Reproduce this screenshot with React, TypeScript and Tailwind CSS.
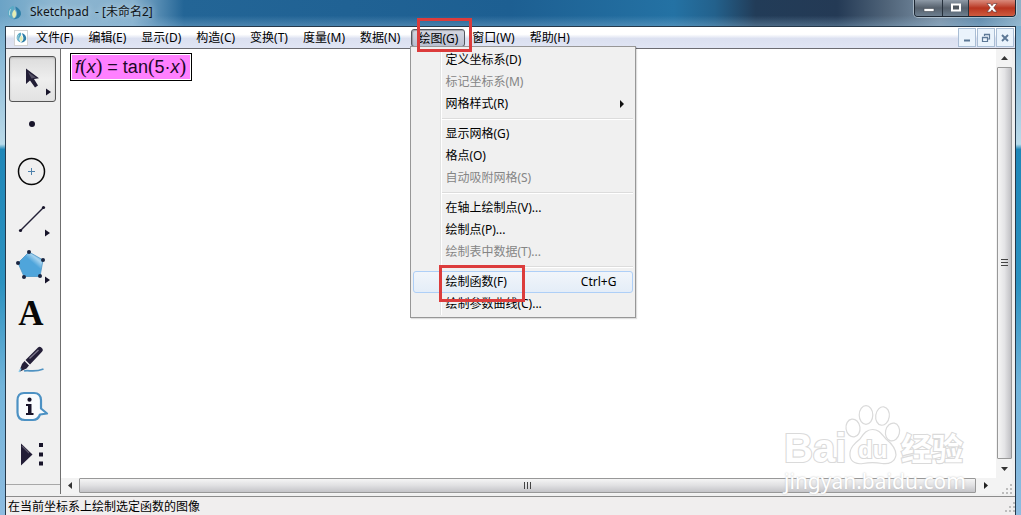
import type { ReactNode } from "react";

type MenuEntry = {
  label: string;
  disabled?: boolean;
  submenu?: boolean;
  active?: boolean;
  shortcut?: string;
};

const plotMenu: MenuEntry[][] = [
  [
    { label: "定义坐标系(D)" },
    { label: "标记坐标系(M)", disabled: true },
    { label: "网格样式(R)", submenu: true },
  ],
  [
    { label: "显示网格(G)" },
    { label: "格点(O)" },
    { label: "自动吸附网格(S)", disabled: true },
  ],
  [
    { label: "在轴上绘制点(V)..." },
    { label: "绘制点(P)..." },
    { label: "绘制表中数据(T)...", disabled: true },
  ],
  [
    { label: "绘制函数(F)", active: true, shortcut: "Ctrl+G" },
    { label: "绘制参数曲线(C)..." },
  ],
];

const menusBefore = ["文件(F)", "编辑(E)", "显示(D)", "构造(C)", "变换(T)", "度量(M)", "数据(N)"];
const menusAfter = ["窗口(W)", "帮助(H)"];

function AppLogo({ className }: { className: string }) {
  return (
    <svg viewBox="0 0 16 16" className={className} aria-hidden="true">
      <path d="M6.500 .8C2.500 2.500 .5 6 1 9.500C1.500 12.500 4 14.800 7 15C4.500 12.500 4 9 6.500 6C8 4 8 2 6.500 .8Z" fill="#5aa9c4" />
      <path d="M9 1.500C13.500 3.500 15.500 7 14.800 10.500C13.800 14 10 15.800 6.500 15C10 13.800 11.200 11 10.700 8C10.400 6 8.800 4 9 1.500Z" fill="#2f7fa8" />
      <path d="M8 5C4.800 8 4.800 11.500 7.500 14C10.500 11.500 10.500 8 8 5Z" fill="#e3edb4" />
      <path d="M4 4.500C2.500 6.500 2.300 9 3 11" fill="none" stroke="#c5e3ea" strokeWidth="1" />
    </svg>
  );
}

function TopMenu({ label }: { label: string }) {
  return (
    <button type="button" className="h-full shrink-0 pr-2 pl-[7px] whitespace-nowrap">
      {label}
    </button>
  );
}

function MenuRow({ entry }: { entry: MenuEntry }) {
  return (
    <button
      type="button"
      disabled={entry.disabled}
      className={
        entry.active
          ? "relative flex h-[22px] w-full items-center rounded-[3px] border border-[#aecff7] bg-gradient-to-b from-[#f1f5fa] to-[#e4edf8] pr-4 pl-[31px] text-left"
          : "relative flex h-[22px] w-full items-center border border-transparent pr-2 pl-[31px] text-left disabled:text-[#858585]"
      }
    >
      <span className="grow whitespace-nowrap">{entry.label}</span>
      {entry.shortcut && <span>{entry.shortcut}</span>}
      {entry.submenu && (
        <svg viewBox="0 0 4 8" className="h-2 w-1" aria-hidden="true">
          <path d="M0 0L4 4L0 8Z" fill="#111" />
        </svg>
      )}
      {entry.active && (
        <span className="pointer-events-none absolute -top-[7px] left-[25px] z-10 h-[37px] w-[86px] border-[3px] border-[#dc3c3c]" />
      )}
    </button>
  );
}

function PlotMenu() {
  return (
    <div className="absolute top-[17px] -left-px z-20 w-[226px] border border-[#979797] bg-[#f0f0f0] p-[2px] shadow-[1px_1px_1px_#00000020]">
      <span className="absolute inset-y-[2px] left-[29px] w-[2px] border-r border-l border-r-white border-l-[#e2e3e3]" />
      {plotMenu.map((group, index) => (
        <div key={group[0].label}>
          {index > 0 && (
            <div className="flex h-2 items-center pl-7">
              <div className="h-[2px] grow border-t border-b border-t-[#dcdcdc] border-b-white" />
            </div>
          )}
          {group.map((entry) => (
            <MenuRow key={entry.label} entry={entry} />
          ))}
        </div>
      ))}
    </div>
  );
}

function Tool({ label, selected, children }: { label: string; selected?: boolean; children: ReactNode }) {
  return (
    <button
      type="button"
      aria-label={label}
      className={
        selected
          ? "mb-px h-[46px] w-[47px] shrink-0 rounded-[3px] border border-[#555] bg-gradient-to-b from-[#dcdcdc] via-[#eeeeee] to-[#e2e2e2] shadow-[inset_0_1px_2px_#00000030]"
          : "h-[47px] w-[47px] shrink-0"
      }
    >
      <svg viewBox="0 0 47 47" className={selected ? "-m-px h-[47px] w-[47px]" : "h-[47px] w-[47px]"} aria-hidden="true">
        {children}
      </svg>
    </button>
  );
}

function Toolbox() {
  return (
    <div className="flex w-[55px] shrink-0 flex-col border-r border-[#6f6f6f] bg-[#f0f0f0] pt-[7px]">
      <div className="flex flex-col pl-[3px]">
        <Tool label="移动箭头工具" selected>
          <path d="M17 12.500V28L21 24.500L26 31.500L29 29.500L25 23L30 22.200Z" fill="#211d35" />
          <path d="M19 16L27 21.500L22.500 22.500Z" fill="#555166" />
          <path d="M37 32.500V39.500L42 36Z" fill="#17142a" />
        </Tool>
        <Tool label="点工具">
          <circle cx="23" cy="21" r="3" fill="#17142a" />
        </Tool>
        <Tool label="圆工具">
          <circle cx="22.500" cy="21.500" r="13" fill="none" stroke="#080808" strokeWidth="1.500" />
          <path d="M19 21.500H26M22.500 18V25" stroke="#4f82ac" strokeWidth="1" />
        </Tool>
        <Tool label="线段直尺工具">
          <path d="M11.500 33.500L34.500 10.500" stroke="#222036" strokeWidth="1.400" />
          <circle cx="11.500" cy="33.500" r="1.600" fill="#17142a" />
          <circle cx="34.500" cy="10.500" r="1.600" fill="#17142a" />
          <path d="M36 32.500V39.500L41 36Z" fill="#17142a" />
        </Tool>
        <Tool label="多边形工具">
          <defs>
            <linearGradient id="pentagon" x1="0.3" y1="0.8" x2="0.9" y2="0.1">
              <stop offset="0.500" stopColor="#4fa5db" />
              <stop offset="0.750" stopColor="#a4d2ef" />
              <stop offset="1" stopColor="#4fa5db" />
            </linearGradient>
          </defs>
          <path d="M20 8L34 16L31 32.500H15L9 19Z" fill="url(#pentagon)" stroke="#4b95c6" strokeWidth=".8" />
          <g fill="#1b2540">
            <circle cx="20" cy="8" r="2" />
            <circle cx="34" cy="16" r="2" />
            <circle cx="31" cy="32" r="2" />
            <circle cx="15" cy="33" r="2" />
            <circle cx="9" cy="19" r="2" />
          </g>
          <path d="M36 32.500V39.500L41 36Z" fill="#17142a" />
        </Tool>
        <Tool label="文字工具">
          <text x="22" y="33.500" textAnchor="middle" fontSize="35" fontWeight="700" fontFamily="Liberation Serif, serif" fill="#080808">
            A
          </text>
        </Tool>
        <Tool label="标记工具">
          <path d="M29 9.500Q30.500 8 32 9.200L33.500 10.800Q34.500 12.500 33 13.700L21 26.500L16.500 22Z" fill="#241f38" />
          <path d="M15.500 23L20 27.500L17.500 30.500L10 34L13 26Z" fill="#241f38" />
          <path d="M20.500 20.500L29.500 12" stroke="#7d788c" strokeWidth="1.300" />
          <path d="M10 34L12 30.500" stroke="#8ccff0" strokeWidth="1.500" />
          <path d="M15 33C20 31.500 24 35 34.500 31" fill="none" stroke="#5093c2" strokeWidth="1.800" />
        </Tool>
        <Tool label="信息工具">
          <path d="M15 8H25Q31.500 8 32 15V23.500L38 28.500L31 29.500Q29 35 24 35H16Q8.500 35 8.500 27.500V15.500Q8.500 8 15 8Z" fill="#f8fbfd" stroke="#4c91c3" strokeWidth="2.200" strokeLinejoin="round" />
          <circle cx="20.500" cy="14.700" r="2.100" fill="#17142a" />
          <path d="M17 19H22.500V28H24.500V30H17V28H19V21H17Z" fill="#17142a" />
        </Tool>
        <Tool label="自定义工具">
          <path d="M12 11.500V33.500L23.500 22.500Z" fill="#221d36" />
          <path d="M13 14L20 21" stroke="#5a5568" strokeWidth="1.300" />
          <path d="M30 11H34V15H30ZM30 20.500H34V24.500H30ZM30 29.500H34V33.500H30Z" fill="#17142a" />
        </Tool>
      </div>
      <div className="mt-[5px] w-full border-t border-[#a8a8a8]" />
    </div>
  );
}

function Watermark() {
  return (
    <div className="pointer-events-none absolute right-[43px] bottom-0 z-10 w-[188px]">
      <svg viewBox="-2 0 188 68" className="h-[68px] w-full" aria-hidden="true">
        <g fill="#fff" stroke="#dadada" strokeWidth="1.200">
          <ellipse cx="70" cy="28" rx="7" ry="9" transform="rotate(-8 70 28)" />
          <ellipse cx="83" cy="15" rx="6.800" ry="9.300" />
          <ellipse cx="99.500" cy="16" rx="6.800" ry="9.300" transform="rotate(8 99.500 16)" />
          <ellipse cx="109.500" cy="32" rx="7" ry="9" transform="rotate(12 109.500 32)" />
          <path d="M89.500 29.500C83 29.500 80 35 77 39C72 43 66 48 67 56C68 62.500 74 64.500 80 63.500C86 62.500 93 62.500 99 63.500C106 64.500 112 62 113 55C113 48 108 43 103 39C99 35 97 29.500 89.500 29.500Z" />
        </g>
        <g fill="#fff" stroke="#dadada" strokeWidth="2.200" paintOrder="stroke" fontWeight="700" fontFamily="Liberation Sans, sans-serif">
          <text x="1" y="62" fontSize="40">Bai</text>
          <text x="75" y="58" fontSize="24">du</text>
          <text x="118" y="60" fontSize="31" fontFamily="Noto Sans CJK SC, sans-serif">经验</text>
        </g>
      </svg>
      <div className="flex justify-center font-['Noto_Sans',sans-serif] text-[21px] leading-[26px] whitespace-nowrap text-white [text-shadow:0_0_2px_#bdbdbd]">
        jingyan.baidu.com
      </div>
    </div>
  );
}

function SizeGrip() {
  return (
    <svg viewBox="0 0 10 10" className="h-[10px] w-[10px]" aria-hidden="true">
      <path d="M8 0h2v2h-2zM8 4h2v2h-2zM4 4h2v2h-2zM8 8h2v2h-2zM4 8h2v2h-2zM0 8h2v2h-2z" fill="#bdbdbd" />
    </svg>
  );
}

function VerticalScrollbar() {
  return (
    <div className="flex w-4 shrink-0 flex-col items-center bg-[#f3f3f3]">
      <button type="button" aria-label="向上滚动" className="flex h-[18px] w-full shrink-0 items-center justify-center">
        <svg viewBox="0 0 7 4" className="h-1 w-[7px]"><path d="M0 4L3.500 0L7 4Z" fill="#333" /></svg>
      </button>
      <div className="flex w-[15px] grow items-center justify-center rounded-[1px] border border-[#989898] bg-gradient-to-r from-[#f5f5f5] via-[#e4e4e6] to-[#c0c0c4]">
        <svg viewBox="0 0 7 8" className="h-2 w-[7px]" aria-hidden="true"><path d="M0 .5H7M0 3.500H7M0 6.500H7" stroke="#444" /></svg>
      </div>
      <button type="button" aria-label="向下滚动" className="flex h-[19px] w-full shrink-0 items-center justify-center">
        <svg viewBox="0 0 7 4" className="h-1 w-[7px]"><path d="M0 0L3.500 4L7 0Z" fill="#333" /></svg>
      </button>
    </div>
  );
}

function HorizontalScrollbar() {
  return (
    <div className="flex h-4 shrink-0 items-start bg-[#f3f3f3]">
      <button type="button" aria-label="向左滚动" className="flex h-[15px] w-[18px] shrink-0 items-center justify-center">
        <svg viewBox="0 0 4 7" className="h-[7px] w-1"><path d="M4 0L0 3.500L4 7Z" fill="#333" /></svg>
      </button>
      <div className="flex h-[15px] grow items-center justify-center rounded-[1px] border border-[#989898] bg-gradient-to-b from-[#f5f5f5] via-[#e0e0e2] to-[#c4c4c8]">
        <svg viewBox="0 0 8 7" className="h-[7px] w-2" aria-hidden="true"><path d="M.5 0V7M3.500 0V7M6.500 0V7" stroke="#444" /></svg>
      </div>
      <button type="button" aria-label="向右滚动" className="flex h-[15px] w-5 shrink-0 items-center justify-center">
        <svg viewBox="0 0 4 7" className="h-[7px] w-1"><path d="M0 0L4 3.500L0 7Z" fill="#222" /></svg>
      </button>
      <div className="flex h-full w-4 shrink-0 items-end justify-end">
        <SizeGrip />
      </div>
    </div>
  );
}

function TitleBar() {
  return (
    <header className="flex h-[26px] shrink-0 items-start bg-[linear-gradient(to_bottom,#ffffff00_60%,#9cc4e055),linear-gradient(to_right,#6ba3c6_0%,#8db6d0_5%,#86b0cd_13%,#236596_18%,#1d5f92_50%,#2472a4_66%,#23618c_70%,#223c58_74%,#243a55_82%,#51657a_87%,#7d93a8_92%,#5e87a8_96%,#8fb2c8_100%)]">
      <div className="flex h-6 grow items-center pl-[7px]">
        <AppLogo className="h-[15px] w-[15px]" />
        <h1 className="ml-2 text-[12px] whitespace-pre text-[#101418] [text-shadow:0_0_6px_#d8e8f2]">Sketchpad  - [未命名2]</h1>
      </div>
      <div className="mr-[5px] flex h-[17px] shrink-0 overflow-hidden rounded-b-[4px] border border-t-0 border-[#1d2733] shadow-[0_0_0_1px_#d7e2ea90]">
        <button type="button" aria-label="最小化" className="flex w-7 items-center justify-center border-r border-[#26313d] bg-gradient-to-b from-[#8e9aa7] via-[#55606c] to-[#6d7f90]">
          <svg viewBox="0 0 12 10" className="h-[10px] w-3"><path d="M1 5.500H11V8.500H1Z" fill="#fff" stroke="#414850" strokeWidth=".6" /></svg>
        </button>
        <button type="button" aria-label="最大化" className="flex w-[26px] items-center justify-center border-r border-[#26313d] bg-gradient-to-b from-[#8e9aa7] via-[#55606c] to-[#6d7f90]">
          <svg viewBox="0 0 12 10" className="h-[10px] w-3"><path d="M2 1.500H10V7.500H2Z" fill="#505860" stroke="#fff" strokeWidth="2" /></svg>
        </button>
        <button type="button" aria-label="关闭" className="flex w-[46px] items-center justify-center bg-gradient-to-b from-[#d98a7c] via-[#b8341f] to-[#cf5a3e]">
          <svg viewBox="0 0 12 10" className="h-[10px] w-3"><path d="M1 .5H4.300L6 2.800L7.700 .5H11L7.800 4.800L11 9H7.700L6 6.800L4.300 9H1L4.200 4.800Z" fill="#fff" stroke="#5f3030" strokeWidth=".6" /></svg>
        </button>
      </div>
    </header>
  );
}

const mdiButton = "flex h-[19px] w-[18px] items-center justify-center border border-[#a9bdd4] bg-[#eaf3fc]";

function MenuBar() {
  return (
    <nav className="flex h-[22px] shrink-0 items-center border-b border-[#6c6c72] bg-gradient-to-b from-white from-35% via-[#dbe0f0] via-55% to-[#e0e5f4] pl-2 text-[12px]">
      <div className="mr-px flex h-4 w-[14px] shrink-0 items-center justify-center border border-[#d4d4d4] bg-white">
        <AppLogo className="h-[11px] w-[11px]" />
      </div>
      <div className="flex h-[18px]">
        {menusBefore.map((label) => (
          <TopMenu key={label} label={label} />
        ))}
        <div className="relative ml-[3px]">
          <button type="button" aria-expanded="true" className="h-[18px] rounded-[3px] border border-[#55585f] bg-gradient-to-b from-[#d6d9e2] to-[#b9bfd0] px-[6px] whitespace-nowrap shadow-[inset_1px_1px_1px_#00000040]">
            绘图(G)
          </button>
          <PlotMenu />
          <span className="pointer-events-none absolute -top-[11px] left-[6px] z-30 h-[34px] w-[55px] border-[3px] border-[#dc3c3c]" />
        </div>
        {menusAfter.map((label) => (
          <TopMenu key={label} label={label} />
        ))}
      </div>
      <div className="mr-px ml-auto flex gap-px">
        <button type="button" aria-label="最小化文档" className={mdiButton}>
          <svg viewBox="0 0 10 10" className="h-[10px] w-[10px]"><path d="M2 7.500H8" stroke="#5d7896" strokeWidth="2" /></svg>
        </button>
        <button type="button" aria-label="还原文档" className={mdiButton}>
          <svg viewBox="0 0 10 10" className="h-[10px] w-[10px]"><path d="M3.500 3V1.500H8.500V6H7M1.500 4.500H6.500V8.500H1.500Z" fill="none" stroke="#5d7896" strokeWidth="1.200" /><path d="M3 1.500H9M1 4.500H7" stroke="#5d7896" strokeWidth="1.600" /></svg>
        </button>
        <button type="button" aria-label="关闭文档" className={mdiButton}>
          <svg viewBox="0 0 10 10" className="h-[10px] w-[10px]"><path d="M2 2L8 8M8 2L2 8" stroke="#5d7896" strokeWidth="1.900" /></svg>
        </button>
      </div>
    </nav>
  );
}

const paren = "font-['Liberation_Serif',serif] text-[20px] leading-[22px]";

export default function App() {
  return (
    <div className="flex h-screen min-h-96 flex-col overflow-hidden bg-[linear-gradient(to_bottom,#6ba5ca_0%,#b8d8e8_27%,#b8dceb_28%,#1f87b8_29%,#2c92c0_55%,#72b4da_75%,#8ebce0_100%)] font-['Noto_Sans','Noto_Sans_CJK_SC',sans-serif] text-black">
      <TitleBar />
      <div className="mx-[5px] flex min-h-0 grow flex-col border-x border-t border-[#25384a] bg-[#f0f0f0]">
        <MenuBar />
        <div className="flex min-h-0 grow pr-[3px]">
          <Toolbox />
          <div className="relative flex min-w-0 grow flex-col">
            <div className="flex min-h-0 grow">
              <main className="grow bg-white pt-1 pl-[9px]">
                <div className="inline-block border border-black p-px">
                  <div className="h-6 bg-[#ff80ff] pr-1 pl-[3px] font-['Liberation_Sans',sans-serif] text-[18px] leading-[22px] whitespace-nowrap text-[#1c0828]">
                    <i>f</i>
                    <span className={paren}>(</span>
                    <i>x</i>
                    <span className={paren}>)</span> = tan
                    <span className={paren}>(</span>5·<i>x</i>
                    <span className={paren}>)</span>
                  </div>
                </div>
              </main>
              <VerticalScrollbar />
            </div>
            <HorizontalScrollbar />
            <Watermark />
          </div>
        </div>
        <footer className="mt-[2px] flex h-[19px] shrink-0 items-center border-t border-[#8c8c8c] bg-[#f0eeee] pt-[2px] pl-[2px] text-[12px]">
          <span className="grow">在当前坐标系上绘制选定函数的图像</span>
          <SizeGrip />
        </footer>
      </div>
    </div>
  );
}
